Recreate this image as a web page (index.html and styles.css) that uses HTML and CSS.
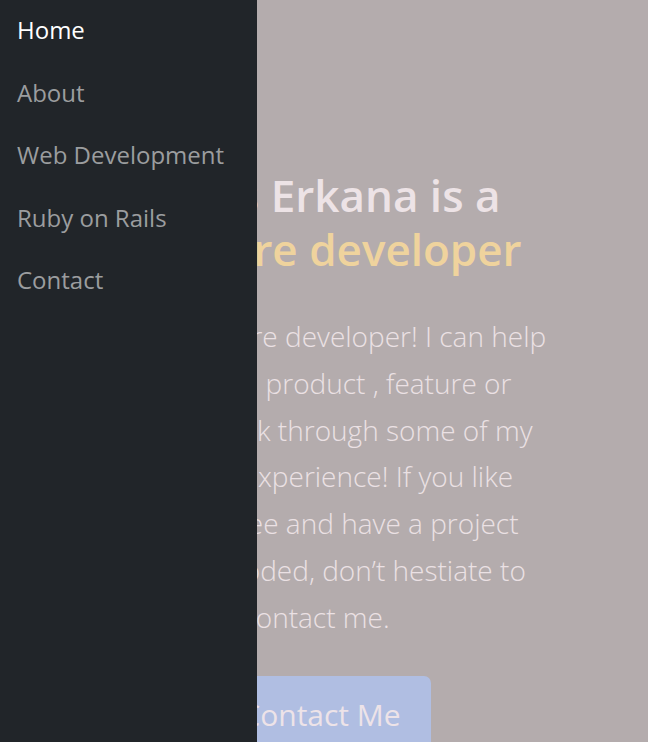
FILE: index.html
```html
<!DOCTYPE html>
<html lang="en">
<head>
<meta charset="utf-8">
<title>Yonas Erkana</title>
<link rel="stylesheet" href="styles.css">
</head>
<body>
<main class="hero">
  <div class="hero-inner">
    <h1 class="hero-title">Yonas Erkana is a <span class="accent">software developer</span></h1>
    <p class="hero-text">I am a software developer! I can help<br>you build a product , feature or<br>website. Look through some of my<br>work and experience! If you like<br>what you see and have a project<br>you need coded, don’t hestiate to<br>contact me.</p>
    <a class="btn-contact" href="#">Contact Me</a>
  </div>
</main>
<aside class="offcanvas">
  <nav class="nav">
    <a class="nav-link active" href="#">Home</a>
    <a class="nav-link" href="#">About</a>
    <a class="nav-link" href="#">Web Development</a>
    <a class="nav-link" href="#">Ruby on Rails</a>
    <a class="nav-link" href="#">Contact</a>
  </nav>
</aside>
</body>
</html>
```

FILE: styles.css
```css
html, body {
  margin: 0;
  height: 100%;
  overflow: hidden;
}
body {
  background: #b4acad;
  font-family: "Open Sans", "Noto Sans", sans-serif;
}
.hero {
  padding-top: 168px;
}
.hero-inner {
  width: 500px;
  margin-left: 66px;
  text-align: center;
}
.hero-title {
  margin: 0;
  font-size: 44px;
  line-height: 54px;
  font-weight: 600;
  color: #ede3e6;
}
.accent {
  display: block;
  color: #efd39d;
}
.hero-text {
  margin: 37px 0 0;
  font-size: 28px;
  font-weight: 300;
  line-height: 46.8px;
  color: #ebe1e4;
}
.btn-contact {
  display: inline-block;
  box-sizing: border-box;
  margin: 35px 0 0 10px;
  height: 78px;
  line-height: 78px;
  width: 220px;
  border-radius: 7px;
  background: #b0bee2;
  color: #ede3e8;
  font-size: 30px;
  text-decoration: none;
}
.offcanvas {
  position: fixed;
  top: 0;
  left: 0;
  bottom: 0;
  width: 257px;
  background: #212529;
}
.nav {
  display: flex;
  flex-direction: column;
  padding: 9px 0 0 17px;
}
.nav-link {
  font-size: 24px;
  line-height: 42px;
  padding: 0 0 20.5px;
  color: #9b9d9f;
  text-decoration: none;
}
.nav-link.active {
  color: #ffffff;
}
```
